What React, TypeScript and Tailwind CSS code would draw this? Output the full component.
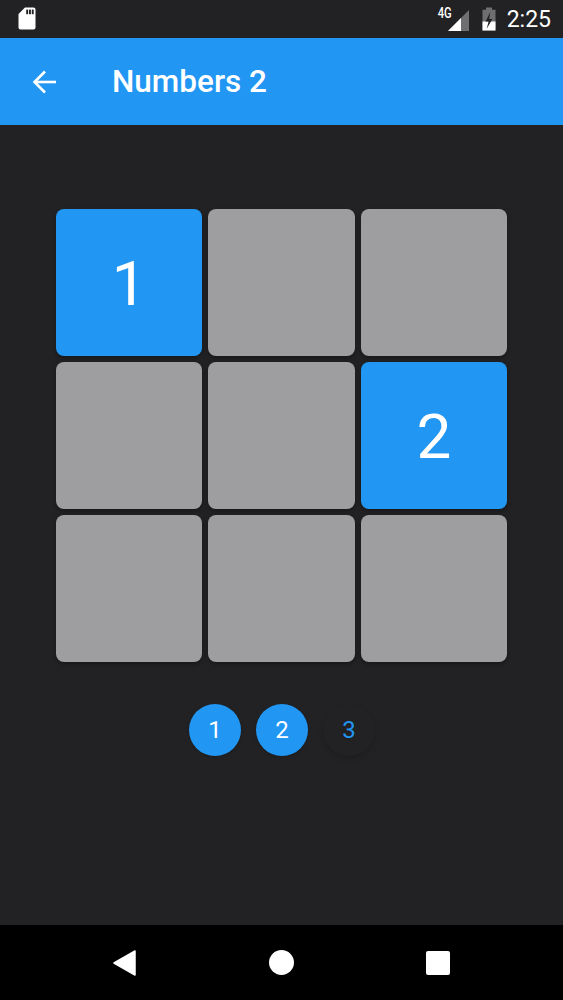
const cells: (number | null)[] = [1, null, null, null, null, 2, null, null, null];

function Cell({ value }: { value: number | null }) {
  return (
    <div
      className={`h-[146.5px] rounded-[8px] flex items-center justify-center pt-[4px] text-white text-[62px] leading-none shadow-[0_2px_4px_rgba(0,0,0,0.35)] ${
        value ? 'bg-[#2196f3]' : 'bg-[#9e9d9f]'
      }`}
    >
      {value}
    </div>
  );
}

function Dot({ label, done = false }: { label: string; done?: boolean }) {
  return (
    <div
      className={`w-[52px] h-[52px] rounded-full flex items-center justify-center text-[24px] leading-none ${
        done
          ? 'bg-[#2196f3] text-white shadow-[0_1px_3px_rgba(0,0,0,0.2)]'
          : 'bg-[#222124] text-[#2196f3] shadow-[0_3px_5px_rgba(0,0,0,0.15)]'
      }`}
    >
      {label}
    </div>
  );
}

export default function App() {
  return (
    <div className="w-[563px] h-[1000px] flex flex-col bg-[#222124] overflow-hidden font-['Roboto',sans-serif]">
      {/* status bar */}
      <div className="h-[38px] shrink-0 flex items-center justify-between pl-[18px] pr-[12px] text-white">
        <svg width="18" height="23" viewBox="0 0 18 23" className="mb-[1px]">
          <path
            d="M7 0.5H15.5a2 2 0 0 1 2 2V20.5a2 2 0 0 1-2 2H2.5a2 2 0 0 1-2-2V7Z"
            fill="#fff"
          />
          <rect x="8.2" y="2.6" width="1.9" height="4.6" fill="#222124" />
          <rect x="11" y="2.6" width="1.9" height="4.6" fill="#222124" />
          <rect x="13.8" y="2.6" width="1.9" height="4.6" fill="#222124" />
        </svg>
        <div className="flex items-center">
          <div className="relative w-[28px] h-[24px] mr-[12px]">
            <svg width="22" height="22" viewBox="0 0 22 22" className="absolute right-[1px] bottom-[-1px]">
              <path d="M0 21 21 0V21Z" fill="#6f6e70" />
              <path d="M0 21 13 8V21Z" fill="#fff" />
            </svg>
            <span className="absolute left-[-7px] top-[-1px] text-[14px] leading-none font-medium text-white scale-x-[0.8]">
              4G
            </span>
          </div>
          <svg width="14" height="24" viewBox="0 0 14 24" className="mr-[11px] ml-[-1px]">
            <path d="M4 0.5h6v2.2h3.5V23.5H0.5V2.7H4Z" fill="#6f6e70" />
            <path d="M0.5 14.5H13.5V23.5H0.5Z" fill="#fff" />
            <path d="M8.2 5 3.6 14.5H6.6L4.6 22 10.4 12H7.2Z" fill="#222124" />
          </svg>
          <span className="text-[23px] leading-none">2:25</span>
        </div>
      </div>

      {/* app bar */}
      <div className="h-[87px] shrink-0 bg-[#2196f3] flex items-center pl-[32px] text-white">
        <svg width="24" height="24" viewBox="0 0 24 24" fill="none" stroke="#fff" strokeWidth="2.6">
          <path d="M25 12H3" />
          <path d="M13 1.5 2.5 12 13 22.5" />
        </svg>
        <span className="ml-[56px] text-[31.5px] leading-none font-medium">Numbers 2</span>
      </div>

      {/* board */}
      <main className="flex-1 flex flex-col items-center pt-[84px]">
        <div className="w-[451px] grid grid-cols-3 gap-x-[6px] gap-y-[6.5px]">
          {cells.map((c, i) => (
            <Cell key={i} value={c} />
          ))}
        </div>
        <div className="flex gap-[15px] mt-[42.5px] ml-[1px]">
          <Dot label="1" done />
          <Dot label="2" done />
          <Dot label="3" />
        </div>
      </main>

      {/* nav bar */}
      <div className="h-[75px] shrink-0 bg-black relative flex items-center">
        <svg width="24" height="26" viewBox="0 0 24 26" className="ml-[113px]">
          <path d="M22 1 1 13 22 25Z" fill="#fff" stroke="#fff" strokeWidth="1.5" strokeLinejoin="round" />
        </svg>
        <div className="w-[25px] h-[25px] rounded-full bg-white ml-[132px]" />
        <div className="w-[24px] h-[24px] rounded-[2px] bg-white ml-[132px]" />
      </div>
    </div>
  );
}
